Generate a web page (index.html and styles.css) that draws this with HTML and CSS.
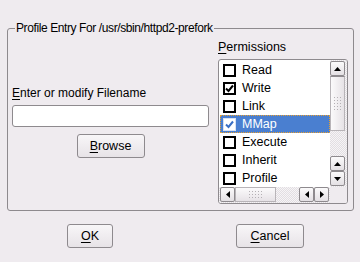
FILE: index.html
```html
<!DOCTYPE html>
<html>
<head>
<meta charset="utf-8">
<link rel="stylesheet" href="styles.css">
</head>
<body>
<div class="dialog">
  <fieldset class="group">
    <legend class="group-title">Profile Entry For /usr/sbin/httpd2-prefork</legend>
    <div class="group-body">
      <div class="file-col">
        <div class="label label-file"><u>E</u>nter or modify Filename</div>
        <input class="text-input" type="text">
        <button class="btn btn-browse"><u>B</u>rowse</button>
      </div>
      <div class="perm-col">
        <div class="label"><u>P</u>ermissions</div>
        <div class="listbox">
          <div class="list">
            <div class="row"><span class="cb"></span><span class="row-text">Read</span></div>
            <div class="row"><span class="cb"><svg viewBox="0 0 9 9" width="9" height="9"><polyline points="1,4.5 3.5,7 8,1.5" fill="none" stroke="#000" stroke-width="2"/></svg></span><span class="row-text">Write</span></div>
            <div class="row"><span class="cb"></span><span class="row-text">Link</span></div>
            <div class="row selected"><span class="cb cb-sel"><svg viewBox="0 0 9 9" width="9" height="9"><polyline points="1,4.5 3.5,7 8,1.5" fill="none" stroke="#3a6fc4" stroke-width="2"/></svg></span><span class="row-text">MMap</span></div>
            <div class="row"><span class="cb"></span><span class="row-text">Execute</span></div>
            <div class="row"><span class="cb"></span><span class="row-text">Inherit</span></div>
            <div class="row"><span class="cb"></span><span class="row-text">Profile</span></div>
          </div>
          <div class="vscroll">
            <div class="sbtn"><svg width="7" height="4" viewBox="0 0 7 4"><polygon points="0,4 7,4 3.5,0" fill="#000"/></svg></div>
            <div class="vthumb"><span class="grip vgrip"></span></div>
            <div class="trough"></div>
            <div class="sbtn"><svg width="7" height="4" viewBox="0 0 7 4"><polygon points="0,4 7,4 3.5,0" fill="#000"/></svg></div>
            <div class="sbtn"><svg width="7" height="4" viewBox="0 0 7 4"><polygon points="0,0 7,0 3.5,4" fill="#000"/></svg></div>
          </div>
          <div class="hscroll">
            <div class="sbtn hbtn"><svg width="4" height="7" viewBox="0 0 4 7"><polygon points="4,0 4,7 0,3.5" fill="#000"/></svg></div>
            <div class="hthumb"><span class="grip hgrip"></span></div>
            <div class="trough"></div>
            <div class="sbtn hbtn"><svg width="4" height="7" viewBox="0 0 4 7"><polygon points="4,0 4,7 0,3.5" fill="#000"/></svg></div>
            <div class="sbtn hbtn"><svg width="4" height="7" viewBox="0 0 4 7"><polygon points="0,0 0,7 4,3.5" fill="#000"/></svg></div>
          </div>
          <div class="corner"></div>
        </div>
      </div>
    </div>
  </fieldset>
  <div class="actions">
    <button class="btn btn-ok"><u>O</u>K</button>
    <button class="btn btn-cancel"><u>C</u>ancel</button>
  </div>
</div>
</body>
</html>
```
FILE: styles.css
```css
html, body {
  margin: 0;
  padding: 0;
}
body {
  width: 360px;
  height: 262px;
  overflow: hidden;
  background: #efebef;
  font-family: "Liberation Sans", Arial, sans-serif;
  font-size: 12px;
  color: #000;
}
u { text-decoration: underline; text-underline-offset: 2px; }
.dialog {
  padding-top: 20px;
}
.group {
  margin: 0 6px 0 7px;
  padding: 0;
  border: 1px solid #8e8a8e;
  border-radius: 3px;
  min-width: 0;
}
.group-title {
  margin-left: 7px;
  padding: 0 1px;
  line-height: 16px;
  font-size: 12px;
  letter-spacing: -0.4px;
}
.group-body {
  display: grid;
  grid-template-columns: 197px 130px;
  column-gap: 9px;
  padding: 3px 5px 6px 4px;
}
.label {
  line-height: 16px;
  font-size: 12.5px;
}
.label-file {
  font-size: 12px;
}
.file-col {
  align-self: center;
  display: flex;
  flex-direction: column;
}
.text-input {
  margin: 4px 0 0;
  height: 22px;
  box-sizing: border-box;
  border: 1px solid #8e8a8e;
  border-radius: 3px;
  background: #fff;
  padding: 0 3px;
}
.btn {
  box-sizing: border-box;
  height: 24px;
  border: 1px solid #8e8a8e;
  border-radius: 3px;
  background: linear-gradient(#f8f6f8, #e7e3e7);
  font-family: "Liberation Sans", Arial, sans-serif;
  font-size: 12.5px;
  color: #000;
  padding: 0;
}
.btn-browse {
  width: 68px;
  margin: 7px auto 0;
}
.perm-col {
  display: flex;
  flex-direction: column;
}
.listbox {
  margin-top: 4px;
  height: 145px;
  box-sizing: border-box;
  border: 1px solid #8e8a8e;
  border-radius: 3px;
  background: #fff;
  display: grid;
  grid-template-columns: 111px 17px;
  grid-template-rows: 127px 16px;
  overflow: hidden;
}
.list {
  padding-top: 1px;
}
.row {
  height: 18px;
  display: flex;
  align-items: center;
  padding-left: 4px;
  font-size: 12.5px;
}
.row.selected {
  background: #4a7fd0;
  color: #fff;
  outline: 1px dotted #e8a030;
  outline-offset: -1px;
  margin-left: 1px;
  padding-left: 3px;
}
.cb {
  width: 13px;
  height: 13px;
  box-sizing: border-box;
  border: 2px solid #000;
  background: #fff;
  display: flex;
  align-items: center;
  justify-content: center;
  margin-right: 6px;
}
.cb-sel {
  border: 1px solid #d8e2f2;
}
.vscroll {
  display: flex;
  flex-direction: column;
  padding: 1px 2px 1px 0;
  background: repeating-conic-gradient(#e2dee2 0 25%, #f6f4f6 0 50%) 0 0/2px 2px;
}
.sbtn {
  box-sizing: border-box;
  height: 15px;
  flex: none;
  border: 1px solid #8e8a8e;
  border-radius: 2px;
  background: linear-gradient(#fbfafb, #e4e0e4);
  display: flex;
  align-items: center;
  justify-content: center;
}
.vthumb {
  height: 55px;
  box-sizing: border-box;
  border: 1px solid #b8b4b8;
  border-top: 1px solid #8e8a8e;
  background: linear-gradient(90deg, #fbfafb, #e6e2e6);
  display: flex;
  align-items: center;
  justify-content: center;
  flex: none;
}
.trough {
  flex: 1;
}
.grip {
  display: block;
  background: radial-gradient(circle, #b4b0b4 0.7px, transparent 0.9px) 0 0/3px 3px;
}
.vgrip { width: 9px; height: 15px; }
.hgrip { width: 15px; height: 9px; }
.hscroll {
  display: flex;
  padding: 0 1px 1px 1px;
  background: repeating-conic-gradient(#e2dee2 0 25%, #f6f4f6 0 50%) 0 0/2px 2px;
}
.hbtn {
  width: 15px;
  height: 15px;
}
.hthumb {
  width: 41px;
  box-sizing: border-box;
  border: 1px solid #b8b4b8;
  background: linear-gradient(#fbfafb, #e6e2e6);
  display: flex;
  align-items: center;
  justify-content: center;
  flex: none;
}
.hscroll .trough {
  flex: 1;
}
.corner {
  background: #efebef;
}
.actions {
  display: flex;
  padding-top: 13px;
}
.btn-ok {
  width: 46px;
  margin-left: 67px;
}
.btn-cancel {
  width: 68px;
  margin-left: 123px;
}
```
